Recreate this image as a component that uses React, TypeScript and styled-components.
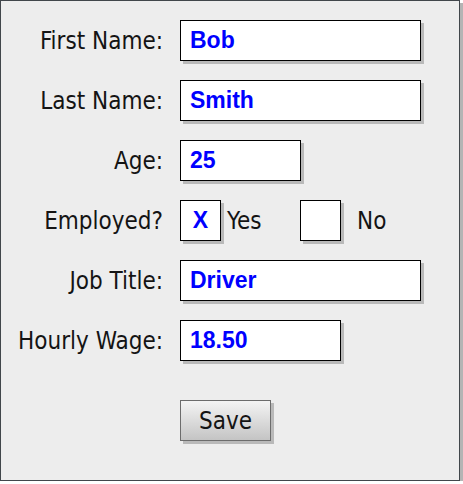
import styled, { createGlobalStyle } from "styled-components";

const employee = {
  firstName: "Bob",
  lastName: "Smith",
  age: "25",
  employed: true,
  jobTitle: "Driver",
  wage: "18.50",
};

const App = () => {
  return (
    <>
      <GlobalStyle />
      <Panel onSubmit={(e) => e.preventDefault()}>
        <Label htmlFor="first">First Name:</Label>
        <TextBox id="first" $w={241} defaultValue={employee.firstName} />

        <Label htmlFor="last">Last Name:</Label>
        <TextBox id="last" $w={241} defaultValue={employee.lastName} />

        <Label htmlFor="age">Age:</Label>
        <TextBox id="age" $w={121} defaultValue={employee.age} />

        <Label as="span">Employed?</Label>
        <Choices>
          <CheckBox role="checkbox" aria-checked={employee.employed}>
            {employee.employed ? "X" : ""}
          </CheckBox>
          <ChoiceText $gap={6} $w={73}>
            Yes
          </ChoiceText>
          <CheckBox role="checkbox" aria-checked={!employee.employed}>
            {!employee.employed ? "X" : ""}
          </CheckBox>
          <ChoiceText $gap={16}>No</ChoiceText>
        </Choices>

        <Label htmlFor="job">Job Title:</Label>
        <TextBox id="job" $w={241} defaultValue={employee.jobTitle} />

        <Label htmlFor="wage">Hourly Wage:</Label>
        <TextBox id="wage" $w={161} defaultValue={employee.wage} />

        <SaveButton type="submit">Save</SaveButton>
      </Panel>
    </>
  );
};

const GlobalStyle = createGlobalStyle`
  body {
    margin: 0;
    background: #ffffff;
  }
`;

const labelFont = `"DejaVu Sans Condensed", "DejaVu Sans", sans-serif`;
const valueFont = `"Liberation Sans", Arial, sans-serif`;

const Panel = styled.form`
  width: 460px;
  height: 481px;
  box-sizing: border-box;
  margin: 0;
  padding-top: 19px;
  border: 1px solid #41464b;
  background: #ededed;
  box-shadow: 3px 3px 0 #b4b4b4;
  display: grid;
  grid-template-columns: 162px auto;
  column-gap: 17px;
  row-gap: 19px;
  align-content: start;
  align-items: center;
  justify-items: start;
`;

const Label = styled.label`
  justify-self: end;
  font-family: ${labelFont};
  font-stretch: condensed;
  font-size: 24px;
  color: #141414;
  white-space: nowrap;
`;

const TextBox = styled.input<{ $w: number }>`
  width: ${(p) => p.$w}px;
  height: 41px;
  box-sizing: border-box;
  margin: 0;
  padding: 0 0 0 9px;
  border: 1px solid #000;
  border-radius: 0;
  background: #fff;
  box-shadow: 3px 3px 0 #b9b9b9;
  font-family: ${valueFont};
  font-weight: bold;
  font-size: 23px;
  color: #0000ff;
  outline: none;
`;

const Choices = styled.div`
  display: flex;
  align-items: center;
`;

const CheckBox = styled.span`
  width: 41px;
  height: 41px;
  box-sizing: border-box;
  border: 1px solid #000;
  background: #fff;
  box-shadow: 3px 3px 0 #b9b9b9;
  display: flex;
  align-items: center;
  justify-content: center;
  font-family: ${valueFont};
  font-weight: bold;
  font-size: 23px;
  color: #0000ff;
`;

const ChoiceText = styled.span<{ $gap: number; $w?: number }>`
  margin-left: ${(p) => p.$gap}px;
  width: ${(p) => (p.$w ? `${p.$w}px` : "auto")};
  font-family: ${labelFont};
  font-stretch: condensed;
  font-size: 24px;
  color: #141414;
`;

const SaveButton = styled.button`
  grid-column: 2;
  margin-top: 20px;
  width: 91px;
  height: 41px;
  padding: 0;
  border: 1px solid #6c6c6c;
  border-radius: 0;
  background: linear-gradient(#f4f4f4, #c4c4c4);
  box-shadow: 3px 3px 0 #b9b9b9;
  font-family: ${labelFont};
  font-stretch: condensed;
  font-size: 24px;
  color: #141414;
`;

export default App;
